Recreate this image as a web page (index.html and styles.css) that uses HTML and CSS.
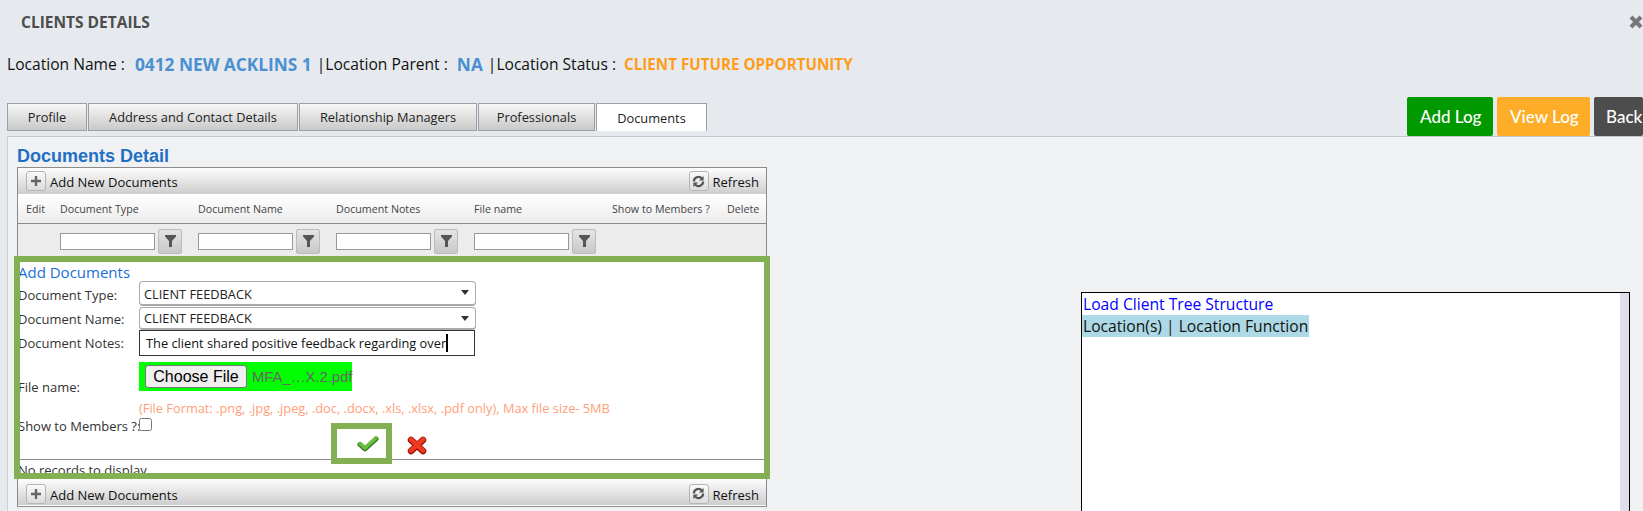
FILE: index.html
```html
<!DOCTYPE html>
<html>
	<head>
		<meta charset="utf-8">
		<title>Clients Details</title>
		<link rel="stylesheet" href="styles.css">
	</head>

	<body>
		<div id='page'>
			<div class='title-bar'>
				<span class='title'>CLIENTS DETAILS</span>
				<svg class='close' width='14' height='14' viewBox='0 0 14 14'><path d='M2 2l10 10M12 2L2 12' stroke='#777' stroke-width='4'/></svg>
			</div>

			<div class='location-row'>
				<span class='loc-label'>Location Name :</span>
				<span class='loc-value name'>0412 NEW ACKLINS 1</span>
				<span class='loc-label'>|Location Parent :</span>
				<span class='loc-value'>NA</span>
				<span class='loc-label'>|Location Status :</span>
				<span class='loc-status'>CLIENT FUTURE OPPORTUNITY</span>
			</div>

			<div class='tabs-row'>
				<div class='tabs'>
					<a class='tab tab-profile'>Profile</a>
					<a class='tab tab-address'>Address and Contact Details</a>
					<a class='tab tab-managers'>Relationship Managers</a>
					<a class='tab tab-pros'>Professionals</a>
					<a class='tab tab-docs active'>Documents</a>
				</div>
				<div class='log-buttons'>
					<a class='log-btn add'>Add Log</a>
					<a class='log-btn view'>View Log</a>
					<a class='log-btn back'>Back</a>
				</div>
			</div>

			<div class='panel'>
				<div class='docs'>
					<h2 class='docs-title'>Documents Detail</h2>

					<div class='grid'>
						<div class='cmd-bar'>
							<span class='cmd-icon'><svg width='12' height='12' viewBox='0 0 12 12'><path d='M6 1v10M1 6h10' stroke='#666' stroke-width='2.400'/></svg></span>
							<span class='cmd-text'>Add New Documents</span>
							<span class='cmd-icon refresh'><svg width='13' height='13' viewBox='0 0 14 14'><path d='M2 7a5 5 0 0 1 8.500-3.500M12 7a5 5 0 0 1-8.500 3.500' fill='none' stroke='#555' stroke-width='2.400'/><path d='M12.500 1v5h-5zM1.500 13V8h5z' fill='#555'/></svg></span>
							<span class='cmd-text'>Refresh</span>
						</div>

						<div class='grid-head'>
							<span>Edit</span>
							<span>Document Type</span>
							<span>Document Name</span>
							<span>Document Notes</span>
							<span>File name</span>
							<span>Show to Members ?</span>
							<span>Delete</span>
						</div>

						<div class='grid-filter'>
							<span></span>
							<div class='filter'><input type='text'><button class='filter-btn'><svg width='11' height='12' viewBox='0 0 11 12'><path d='M0 0h11v1.500L7 6v6H4V6L0 1.500z' fill='#555'/></svg></button></div>
							<div class='filter'><input type='text'><button class='filter-btn'><svg width='11' height='12' viewBox='0 0 11 12'><path d='M0 0h11v1.500L7 6v6H4V6L0 1.500z' fill='#555'/></svg></button></div>
							<div class='filter'><input type='text'><button class='filter-btn'><svg width='11' height='12' viewBox='0 0 11 12'><path d='M0 0h11v1.500L7 6v6H4V6L0 1.500z' fill='#555'/></svg></button></div>
							<div class='filter'><input type='text'><button class='filter-btn'><svg width='11' height='12' viewBox='0 0 11 12'><path d='M0 0h11v1.500L7 6v6H4V6L0 1.500z' fill='#555'/></svg></button></div>
						</div>

						<div class='add-form'>
							<div class='form-title'>Add Documents</div>
							<div class='form-row row-type'>
								<label>Document Type:</label>
								<div class='select'>CLIENT FEEDBACK</div>
							</div>
							<div class='form-row row-name'>
								<label>Document Name:</label>
								<div class='select'>CLIENT FEEDBACK</div>
							</div>
							<div class='form-row row-notes'>
								<label>Document Notes:</label>
								<div class='notes'>The client shared positive feedback regarding over<span class='caret'></span></div>
							</div>
							<div class='form-row row-file'>
								<label>File name:</label>
								<div class='file-cell'>
									<div class='file-pick'>
										<button class='choose'>Choose File</button>
										<span class='file-name'>MFA_…X.2.pdf</span>
									</div>
									<div class='file-hint'>(File Format: .png, .jpg, .jpeg, .doc, .docx, .xls, .xlsx, .pdf only), Max file size- 5MB</div>
								</div>
							</div>
							<div class='form-row row-show'>
								<label>Show to Members ?:</label>
								<input type='checkbox' class='show-check'>
								<div class='save-box'>
									<svg width='22' height='18' viewBox='0 0 22 18'>
										<path d='M3 10.500l5 4.500L19 5' fill='none' stroke='#357f1f' stroke-width='5' stroke-linecap='round' stroke-linejoin='round'/>
										<path d='M3 9.500l5 4.500L19 4' fill='none' stroke='#6cbf3f' stroke-width='3.500' stroke-linecap='round' stroke-linejoin='round'/>
									</svg>
								</div>
								<svg class='cancel' width='20' height='19' viewBox='0 0 20 19'>
									<path d='M4 4l12 11M16 4L4 15' fill='none' stroke='#9c1408' stroke-width='6.500' stroke-linecap='round'/>
									<path d='M4 3.500l12 11M16 3.500L4 14.500' fill='none' stroke='#ee3a20' stroke-width='4.500' stroke-linecap='round'/>
								</svg>
							</div>
							<div class='no-records'>No records to display.</div>
						</div>

						<div class='cmd-bar bottom'>
							<span class='cmd-icon'><svg width='12' height='12' viewBox='0 0 12 12'><path d='M6 1v10M1 6h10' stroke='#666' stroke-width='2.400'/></svg></span>
							<span class='cmd-text'>Add New Documents</span>
							<span class='cmd-icon refresh'><svg width='13' height='13' viewBox='0 0 14 14'><path d='M2 7a5 5 0 0 1 8.500-3.500M12 7a5 5 0 0 1-8.500 3.500' fill='none' stroke='#555' stroke-width='2.400'/><path d='M12.500 1v5h-5zM1.500 13V8h5z' fill='#555'/></svg></span>
							<span class='cmd-text'>Refresh</span>
						</div>

						<div class='highlight'></div>
					</div>
				</div>

				<div class='tree'>
					<div class='tree-body'>
						<a class='tree-link'>Load Client Tree Structure</a>
						<div class='tree-head'>Location(s) | Location Function</div>
					</div>
					<div class='tree-scroll'></div>
				</div>
			</div>
		</div>
	</body>
</html>
```

FILE: styles.css
```css
html, body {
	height: 100%;
}

body {
	margin: 0;
	background: #e6eaee;
	font-family: 'Open Sans', sans-serif;
	color: #222;
	overflow: hidden;
}

#page {
	width: 1643px;
	height: 511px;
	overflow: hidden;
	display: flex;
	flex-direction: column;
}

.title-bar {
	height: 44px;
	padding-left: 21px;
	display: flex;
	align-items: center;
	justify-content: space-between;
	flex: none;
}
.title {
	font-size: 15.5px;
	font-weight: bold;
	color: #4d4d4d;
}
.close {
	margin-top: -1px;
}

.location-row {
	height: 40px;
	padding-left: 7px;
	display: flex;
	align-items: center;
	flex: none;
	font-size: 15.6px;
	color: #111;
	white-space: nowrap;
}
.loc-value {
	margin: 0 5px 0 9px;
	font-size: 17.300px;
	font-weight: bold;
	color: #4a90d2;
}
.loc-value.name {
	margin-left: 10px;
}
.loc-status {
	margin-left: 8px;
	font-size: 15.200px;
	font-weight: bold;
	color: #ff9c1a;
}

.tabs-row {
	height: 52px;
	padding-left: 7px;
	display: flex;
	align-items: flex-end;
	justify-content: space-between;
	flex: none;
}
.tabs {
	display: flex;
	gap: 1px;
	margin-bottom: 5px;
}
.tab {
	box-sizing: border-box;
	height: 28px;
	display: flex;
	align-items: center;
	justify-content: center;
	font-size: 12.800px;
	color: #222;
	background: linear-gradient(#f7f7f7, #c9c9c9);
	border: 1px solid #9a9ea6;
}
.tab-profile { width: 80px; }
.tab-address { width: 210px; }
.tab-managers { width: 178px; }
.tab-pros { width: 117px; }
.tab-docs { width: 111px; }
.tab.active {
	background: #fff;
	border-bottom: 0;
}

.log-buttons {
	display: flex;
	gap: 4px;
	width: 236px;
	flex: none;
}
.log-btn {
	box-sizing: border-box;
	height: 39px;
	display: flex;
	align-items: center;
	font-family: Lato, sans-serif;
	font-size: 17px;
	font-weight: 500;
	color: #fff;
	border-radius: 2px;
	flex: none;
}
.log-btn.add { width: 86px; padding-left: 13px; background: #009900; }
.log-btn.view { width: 93px; padding-left: 13px; background: #fdad27; }
.log-btn.back { width: 49px; padding-left: 12px; background: #4d4d4d; }

.panel {
	flex: 1;
	display: flex;
	background: #eff1f3;
	border-top: 1px solid #c4c6c9;
	border-left: 1px solid #ccd0d4;
	margin-left: 7px;
	min-height: 0;
}

.docs {
	width: 760px;
	padding-left: 9px;
	flex: none;
}
.docs-title {
	margin: 11px 0 2px;
	font-family: 'Liberation Sans', sans-serif;
	font-size: 18px;
	line-height: 17px;
	font-weight: bold;
	color: #1f6fc5;
}

.grid {
	position: relative;
	box-sizing: border-box;
	width: 750px;
	border: 1px solid #8b8b8b;
}

.cmd-bar {
	height: 27px;
	display: flex;
	align-items: center;
	padding-left: 8px;
	padding-right: 7px;
	background: linear-gradient(#fdfdfd, #cdcdcd);
	border-bottom: 1px solid #fff;
	box-sizing: border-box;
	font-size: 13px;
	color: #111;
}
.cmd-bar.bottom {
	padding-top: 3px;
}
.cmd-text {
	padding-top: 2px;
}
.cmd-icon {
	box-sizing: border-box;
	width: 20px;
	height: 20px;
	display: flex;
	align-items: center;
	justify-content: center;
	border: 1px solid #b5b5b5;
	border-radius: 3px;
	background: linear-gradient(#fafafa, #dcdcdc);
	margin-right: 4px;
}
.cmd-icon.refresh {
	margin-left: auto;
}

.grid-head, .grid-filter {
	display: grid;
	grid-template-columns: 42px 138px 138px 138px 138px 115px 1fr;
}
.grid-head {
	height: 29px;
	align-items: center;
	background: linear-gradient(#fff, #ececec);
	border-bottom: 1px solid #8b8b8b;
	box-sizing: border-box;
	font-size: 10.700px;
	color: #444;
}
.grid-head span:first-child {
	padding-left: 8px;
}
.grid-filter {
	box-sizing: border-box;
	height: 32px;
	padding-top: 2px;
	align-items: center;
	background: #ececec;
}
.filter {
	display: flex;
	align-items: center;
	gap: 3px;
}
.filter input {
	box-sizing: border-box;
	width: 95px;
	height: 17px;
	margin: 0;
	padding: 0;
	border: 1px solid #999;
	background: #fff;
}
.filter-btn {
	box-sizing: border-box;
	width: 24px;
	height: 25px;
	padding: 0;
	display: flex;
	align-items: center;
	justify-content: center;
	border: 1px solid #bbb;
	border-radius: 2px;
	background: linear-gradient(#e4e4e4, #c8c8c8);
}

.add-form {
	background: #fff;
	font-size: 13px;
	color: #333;
}
.form-title {
	padding-top: 6px;
	height: 19px;
	font-size: 15px;
	line-height: 20px;
	color: #1a6fd8;
}
.form-row {
	display: flex;
	align-items: center;
}
.form-row label {
	width: 121px;
	flex: none;
	white-space: nowrap;
}
.select {
	box-sizing: border-box;
	position: relative;
	width: 337px;
	display: flex;
	align-items: center;
	padding-left: 4px;
	font-size: 12.800px;
	color: #222;
	border: 1px solid #aaa;
	border-bottom-width: 2px;
	border-radius: 4px;
}
.select::after {
	content: '';
	position: absolute;
	right: 6px;
	top: 8px;
	border: 4px solid transparent;
	border-top: 5px solid #333;
	border-bottom: 0;
}
.row-type label { padding-top: 2px; }
.row-type .select { height: 25px; padding-top: 2px; }
.row-name { margin-top: 1px; }
.row-name .select { height: 23px; }
.row-notes .notes {
	box-sizing: border-box;
	width: 336px;
	height: 26px;
	display: flex;
	align-items: center;
	padding-left: 6px;
	border: 1px solid #333;
	font-size: 12.800px;
	color: #111;
	white-space: nowrap;
}
.caret {
	display: inline-block;
	width: 2px;
	height: 18px;
	background: #000;
}
.row-file {
	margin-top: 6px;
	align-items: flex-start;
}
.row-file label {
	margin-top: 16px;
}
.file-pick {
	width: 213px;
	height: 29px;
	display: flex;
	align-items: center;
	background: #00ff00;
}
.choose {
	box-sizing: border-box;
	flex: none;
	width: 102px;
	height: 23px;
	margin-left: 6px;
	padding: 0;
	font-family: 'Liberation Sans', sans-serif;
	font-size: 16px;
	color: #000;
	background: #efefef;
	border: 1px solid #767676;
	border-radius: 3px;
}
.file-name {
	margin-left: 5px;
	font-family: 'Liberation Sans', sans-serif;
	font-size: 14.800px;
	color: #666;
	white-space: nowrap;
}
.file-hint {
	margin-top: 8px;
	font-size: 12.800px;
	line-height: 18px;
	color: #ffa07a;
	white-space: nowrap;
}
.row-show {
	height: 41px;
	align-items: flex-start;
	margin-top: 1px;
}
.row-show label {
	margin-top: -1px;
}
.show-check {
	width: 13px;
	height: 13px;
	margin: 0;
}
.save-box {
	box-sizing: border-box;
	position: relative;
	width: 61px;
	height: 41px;
	margin: 5px 0 -5px 179px;
	border: 6px solid #82b053;
	background: #fff;
	display: flex;
	align-items: center;
	justify-content: flex-end;
	padding: 0 7px 2px 0;
}
.cancel {
	margin: 18px 0 0 15px;
}
.no-records {
	height: 19px;
	overflow: hidden;
	border-top: 1px solid #8b8b8b;
	font-size: 13px;
	line-height: 21px;
}

.highlight {
	position: absolute;
	left: -4px;
	top: 88px;
	width: 744px;
	height: 211px;
	border: 6px solid #82b053;
	pointer-events: none;
}

.tree {
	box-sizing: border-box;
	display: flex;
	width: 549px;
	height: 300px;
	margin: 155px 0 0 304px;
	border: 1px solid #000;
	background: #fff;
	flex: none;
}
.tree-body {
	flex: 1;
	font-size: 15.650px;
	line-height: 22px;
}
.tree-link {
	display: block;
	padding-left: 1px;
	color: #0000ff;
}
.tree-head {
	display: inline-block;
	padding: 0 1px;
	background: #add8e6;
	color: #111;
}
.tree-scroll {
	width: 9px;
	background: #dfdfeb;
}
```
